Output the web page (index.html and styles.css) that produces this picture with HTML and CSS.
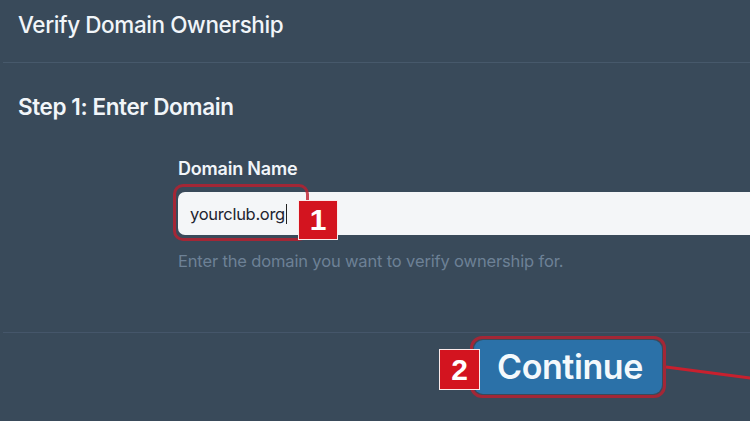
FILE: index.html
```html
<!DOCTYPE html>
<html>
<head>
<meta charset="utf-8">
<link rel="stylesheet" href="styles.css">
</head>
<body>
<div class="page">
  <header class="head">
    <h1 class="title">Verify Domain Ownership</h1>
  </header>
  <section class="content">
    <h2 class="step">Step 1: Enter Domain</h2>
    <div class="field">
      <label class="label">Domain Name</label>
      <div class="input-wrap">
        <div class="input"><span class="value">yourclub.org</span><span class="caret"></span></div>
        <span class="ring ring-input"></span>
        <span class="badge badge-1">1</span>
      </div>
      <p class="help">Enter the domain you want to verify ownership for.</p>
    </div>
  </section>
  <footer class="foot">
    <div class="btn-wrap">
      <span class="badge badge-2">2</span>
      <button class="btn">Continue</button>
      <span class="ring ring-btn"></span>
      <svg class="connector" width="100" height="30" viewBox="0 0 100 30"><line x1="0" y1="4" x2="100" y2="17" stroke="#c8202e" stroke-width="3"/></svg>
    </div>
  </footer>
</div>
</body>
</html>
```

FILE: styles.css
```css
* { box-sizing: border-box; }
html, body { margin: 0; padding: 0; }
body {
  background: #394a5a;
  font-family: Inter, "Noto Sans", sans-serif;
  width: 750px;
  height: 421px;
  overflow: hidden;
}
.page {
  width: 750px;
  height: 421px;
  overflow: hidden;
  padding-left: 3px;
}
.head {
  height: 63px;
  border-bottom: 1px solid #47596b;
  padding: 11px 0 0 15px;
}
.title {
  margin: 0;
  font-size: 22.5px;
  font-weight: 500;
  letter-spacing: -0.4px;
  color: #f1f5f9;
  line-height: 28px;
}
.content {
  height: 270px;
  border-bottom: 1px solid #45566a;
  padding: 30px 0 0 15px;
}
.step {
  margin: 0;
  font-size: 22.5px;
  font-weight: 600;
  letter-spacing: -0.4px;
  color: #f1f5f9;
  line-height: 28px;
}
.field {
  margin-left: 160px;
  margin-top: 37px;
}
.label {
  display: block;
  font-size: 18px;
  font-weight: 600;
  color: #f1f5f9;
  line-height: 22px;
  letter-spacing: -0.2px;
}
.input-wrap {
  position: relative;
  margin-top: 12px;
  width: 620px;
}
.input {
  height: 43px;
  background: #f4f6f8;
  border-radius: 7px 0 0 7px;
  padding: 0 0 0 12px;
  display: flex;
  align-items: center;
  font-size: 16.5px;
  color: #1e2430;
  letter-spacing: -0.3px;
}
.caret {
  display: inline-block;
  width: 1.5px;
  height: 20px;
  background: #222;
  margin-left: 1px;
}
.ring {
  position: absolute;
  border: 3px solid rgba(190, 30, 45, 0.8);
  border-radius: 10px;
  pointer-events: none;
}
.ring-input {
  left: -5px;
  top: -8px;
  width: 136px;
  height: 57px;
}
.badge {
  position: absolute;
  display: flex;
  align-items: center;
  justify-content: center;
  background: #d3141f;
  color: #fff;
  font-weight: 700;
  border: 1.5px solid #fbeaea;
  font-family: "Liberation Sans", Arial, sans-serif;
}
.badge-1 {
  left: 120px;
  top: 8px;
  width: 40px;
  height: 40px;
  font-size: 30px;
}
.help {
  margin: 16px 0 0 0;
  font-size: 16.5px;
  color: #6d8196;
  line-height: 20px;
  letter-spacing: -0.15px;
}
.foot {
  display: flex;
  justify-content: flex-end;
  padding: 7px 88px 0 0;
}
.btn-wrap {
  position: relative;
}
.btn {
  display: block;
  width: 188px;
  height: 54px;
  background: #2b71a8;
  border: none;
  border-radius: 9px;
  color: #f4f9fc;
  font-family: Inter, "Noto Sans", sans-serif;
  font-size: 34px;
  font-weight: 600;
  letter-spacing: -0.4px;
  padding: 0 0 2px 4px;
}
.ring-btn {
  left: -4px;
  top: -4px;
  width: 196px;
  height: 62px;
  border-radius: 12px;
}
.badge-2 {
  left: -35px;
  top: 9px;
  width: 41px;
  height: 41px;
  font-size: 30px;
  z-index: 2;
}
.connector {
  position: absolute;
  left: 192px;
  top: 23px;
}
```
